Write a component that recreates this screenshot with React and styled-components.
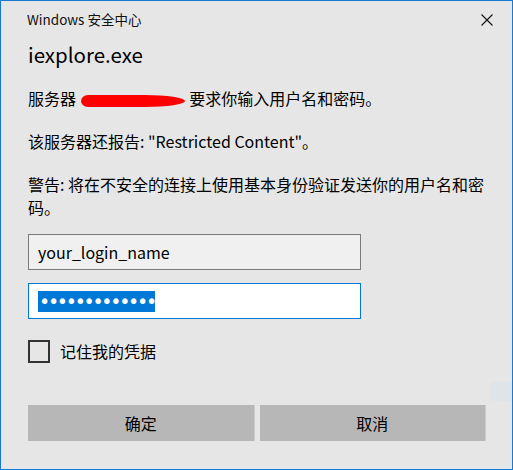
import styled, { createGlobalStyle } from "styled-components";

const GlobalStyle = createGlobalStyle`
    html, body {
        margin: 0;
        padding: 0;
        background: #e6e6e6;
    }
`;

const App = () => {
    return (
        <>
            <GlobalStyle />
            <Dialog>
                <TitleBar>
                    <Caption>Windows 安全中心</Caption>
                    <CloseButton aria-label="close">
                        <svg width="12" height="12" viewBox="0 0 12 12">
                            <path d="M0.5 0.5 L11.5 11.5 M11.5 0.5 L0.5 11.5" stroke="#111" strokeWidth="1.1" />
                        </svg>
                    </CloseButton>
                </TitleBar>
                <Content>
                    <AppName>iexplore.exe</AppName>
                    <Messages>
                        <Message>
                            服务器 <Redacted /> 要求你输入用户名和密码。
                        </Message>
                        <Message>该服务器还报告: "Restricted Content"。</Message>
                        <Message>警告: 将在不安全的连接上使用基本身份验证发送你的用户名和密码。</Message>
                    </Messages>
                    <Fields>
                        <Field>your_login_name</Field>
                        <Field focused>
                            <Selection>•••••••••••••</Selection>
                        </Field>
                    </Fields>
                    <Remember>
                        <CheckBox />
                        <span>记住我的凭据</span>
                    </Remember>
                    <Buttons>
                        <Button>确定</Button>
                        <Button>取消</Button>
                    </Buttons>
                </Content>
                <Ghost />
            </Dialog>
        </>
    );
};

const Dialog = styled.div`
    position: relative;
    box-sizing: border-box;
    width: 513px;
    height: 470px;
    border: 1px solid #1979d0;
    background: #e6e6e6;
    font-family: "Noto Sans CJK SC", "Noto Sans", sans-serif;
    color: #000;
`;

const TitleBar = styled.div`
    display: flex;
    align-items: center;
    justify-content: space-between;
    height: 36px;
    padding: 0 19px 0 26px;
`;

const Caption = styled.div`
    font-size: 13.5px;
    color: #111;
`;

const CloseButton = styled.div`
    display: flex;
    width: 12px;
    height: 12px;
    margin-top: 2px;
`;

const Content = styled.div`
    display: flex;
    flex-direction: column;
    padding: 0 26px 0 27px;
`;

const AppName = styled.div`
    font-size: 20.5px;
    line-height: 28px;
    margin-top: 3px;
    margin-bottom: 19px;
`;

const Messages = styled.div`
    display: flex;
    flex-direction: column;
    gap: 20px;
`;

const Message = styled.p`
    margin: 0;
    font-size: 16px;
    line-height: 23px;
`;

const Redacted = styled.span`
    display: inline-block;
    vertical-align: middle;
    width: 104px;
    height: 12px;
    background: #ff0000;
    border-radius: 7px 40px 40px 7px / 6px 6px 6px 6px;
    margin: 0 1px;
`;

const Fields = styled.div`
    display: flex;
    flex-direction: column;
    gap: 13px;
    width: 333px;
    margin-top: 15px;
`;

const Field = styled.div`
    box-sizing: border-box;
    display: flex;
    align-items: center;
    height: 36px;
    padding: 0 9px;
    font-size: 16px;
    background: ${(p) => (p.focused ? "#ffffff" : "#f0f0f0")};
    border: 1px solid ${(p) => (p.focused ? "#0078d7" : "#7a7a7a")};
`;

const Selection = styled.span`
    display: inline-block;
    height: 21px;
    line-height: 21px;
    padding: 0 0 0 1px;
    background: #0078d7;
    color: #fff;
    font-family: "DejaVu Sans", sans-serif;
    font-size: 19px;
    letter-spacing: -2.3px;
`;

const Remember = styled.label`
    display: flex;
    align-items: center;
    gap: 10px;
    margin-top: 20px;
    font-size: 16px;
`;

const CheckBox = styled.span`
    box-sizing: border-box;
    width: 22px;
    height: 23px;
    border: 2px solid #333;
`;

const Buttons = styled.div`
    display: grid;
    grid-template-columns: 1fr 1fr;
    gap: 5px;
    margin-top: 42px;
    width: 458px;
`;

const Button = styled.div`
    box-sizing: border-box;
    display: flex;
    align-items: center;
    justify-content: center;
    height: 36px;
    background: #b7b7b7;
    border-right: 1px solid #cdcdcd;
    font-size: 16px;
`;

const Ghost = styled.div`
    position: absolute;
    right: 0;
    top: 381px;
    width: 21px;
    height: 19px;
    background: #dfe4e8;
`;

export default App;
